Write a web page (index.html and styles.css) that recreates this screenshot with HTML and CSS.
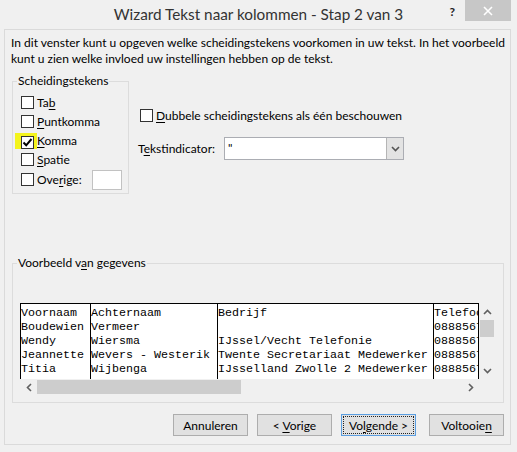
FILE: index.html
```html
<!DOCTYPE html>
<html lang="nl">
<head>
<meta charset="utf-8">
<title>Wizard Tekst naar kolommen</title>
<link rel="stylesheet" href="styles.css">
</head>
<body>
<div class="titlebar">
  <div></div>
  <div class="title">Wizard Tekst naar kolommen - Stap 2 van 3</div>
  <div class="controls">
    <span class="help">?</span>
    <span class="close"><svg width="10" height="10" viewBox="0 0 10 10"><path d="M1 1L9 9M9 1L1 9" stroke="#fff" stroke-width="1.6" fill="none"/></svg></span>
  </div>
</div>
<div class="panel">
  <p class="intro">In dit venster kunt u opgeven welke scheidingstekens voorkomen in uw tekst. In het voorbeeld<br>kunt u zien welke invloed uw instellingen hebben op de tekst.</p>
  <div class="options">
    <fieldset class="group delims">
      <legend>Scheidingstekens</legend>
      <div class="check"><span class="box"></span><span>Ta<u>b</u></span></div>
      <div class="check"><span class="box"></span><span><u>P</u>untkomma</span></div>
      <div class="check"><span class="hl"><span class="box checked"><svg width="11" height="11" viewBox="0 0 11 11"><path d="M1.5 5.5L4.2 8.3L9.5 2" stroke="#000" stroke-width="2" fill="none"/></svg></span></span><span><u>K</u>omma</span></div>
      <div class="check"><span class="box"></span><span><u>S</u>patie</span></div>
      <div class="check other"><span class="box"></span><span>Ove<u>r</u>ige:</span><span class="textbox"></span></div>
    </fieldset>
    <div class="side">
      <div class="check"><span class="box"></span><span><u>D</u>ubbele scheidingstekens als één beschouwen</span></div>
      <div class="indicator">
        <span class="ind-label">T<u>e</u>kstindicator:</span>
        <div class="select"><span class="val">"</span><span class="drop"><svg width="9" height="6" viewBox="0 0 9 6"><path d="M1 1L4.5 4.5L8 1" stroke="#555" stroke-width="1.6" fill="none"/></svg></span></div>
      </div>
    </div>
  </div>
  <fieldset class="group preview">
    <legend>Voorbeeld v<u>a</u>n gegevens</legend>
    <div class="grid">
      <div class="table">
        <div class="col c1">Voornaam
Boudewien
Wendy
Jeannette
Titia</div>
        <div class="col c2">Achternaam
Vermeer
Wiersma
Wevers - Westerik
Wijbenga</div>
        <div class="col c3">Bedrijf

IJssel/Vecht Telefonie
Twente Secretariaat Medewerker
IJsselland Zwolle 2 Medewerker</div>
        <div class="col c4">Telefoon
0888567
0888567
0888567
0888567</div>
      </div>
      <div class="vscroll">
        <span class="arr"><svg width="9" height="6" viewBox="0 0 9 6"><path d="M1 5L4.5 1.5L8 5" stroke="#606060" stroke-width="1.6" fill="none"/></svg></span>
        <span class="vthumb"></span>
        <span class="fill"></span>
        <span class="arr"><svg width="9" height="6" viewBox="0 0 9 6"><path d="M1 1L4.5 4.5L8 1" stroke="#606060" stroke-width="1.6" fill="none"/></svg></span>
      </div>
      <div class="hscroll">
        <span class="arr"><svg width="6" height="9" viewBox="0 0 6 9"><path d="M5 1L1.5 4.5L5 8" stroke="#606060" stroke-width="1.6" fill="none"/></svg></span>
        <span class="hthumb"></span>
        <span class="fill"></span>
        <span class="arr"><svg width="6" height="9" viewBox="0 0 6 9"><path d="M1 1L4.5 4.5L1 8" stroke="#606060" stroke-width="1.6" fill="none"/></svg></span>
      </div>
      <div class="corner"></div>
    </div>
  </fieldset>
  <div class="buttons">
    <button class="btn"><span>Annuleren</span></button>
    <button class="btn"><span>&lt; <u>V</u>orige</span></button>
    <button class="btn focus"><span class="focus-ring"><span>Vo<u>l</u>gende &gt;</span></span></button>
    <button class="btn finish"><span>Voltooie<u>n</u></span></button>
  </div>
</div>
</body>
</html>
```
FILE: styles.css
```css
* { box-sizing: border-box; }
html, body { margin: 0; padding: 0; }
body {
  width: 517px;
  height: 452px;
  overflow: hidden;
  background: #f0f0f0;
  font-family: Lato, "Noto Sans", sans-serif;
  font-size: 12px;
  color: #000;
}
u { text-decoration-thickness: 1px; text-underline-offset: 2px; }

.titlebar {
  height: 29px;
  display: grid;
  grid-template-columns: 1fr auto 1fr;
}
.title {
  font-size: 15.3px;
  line-height: 28px;
  color: #333;
  white-space: nowrap;
}
.controls {
  justify-self: end;
  display: flex;
  align-items: flex-start;
  margin-right: 6px;
}
.help {
  font-weight: bold;
  font-size: 12px;
  color: #222;
  margin-top: 4px;
  margin-right: 10px;
}
.close {
  width: 46px;
  height: 21px;
  background: #c7c7c7;
  display: flex;
  align-items: center;
  justify-content: center;
}

.panel {
  margin: 0 6px 0 4px;
  border: 1px solid #dadada;
  padding: 5px 6px 8px 7px;
}
.intro {
  margin: 0 0 0 -1px;
  line-height: 16px;
  white-space: nowrap;
}
.options {
  display: flex;
  align-items: flex-start;
  margin-top: 6px;
}
.group {
  margin: 0;
  border: 1px solid #dcdcdc;
  min-width: 0;
}
.group legend {
  padding: 0 1px;
  line-height: 16px;
}
.delims {
  width: 117px;
  padding: 4px 6px 3px 4px;
}
.check {
  display: flex;
  align-items: center;
  height: 19px;
  margin-left: 4px;
  white-space: nowrap;
}
.box {
  width: 13px;
  height: 13px;
  border: 1px solid #333;
  background: #fff;
  margin-right: 3px;
  flex: none;
  display: flex;
  align-items: center;
  justify-content: center;
}
.hl {
  display: flex;
  background: #f4f41c;
  margin-left: -6px;
  padding: 3px 3px 0 6px;
}
.hl .box { margin-right: 0; }
.check.other { height: 21px; }
.textbox {
  width: 30px;
  height: 20px;
  margin-left: auto;
  border: 1px solid #c2c2c2;
  background: #fff;
}
.side {
  margin-left: 11px;
  padding-top: 33px;
}
.side .check { margin-left: 0; }
.indicator {
  display: flex;
  align-items: center;
  margin-top: 12px;
}
.ind-label {
  width: 86px;
  margin-left: -2px;
}
.select {
  width: 180px;
  height: 23px;
  border: 1px solid #abadb3;
  background: #fff;
  display: flex;
}
.val {
  flex: 1;
  padding: 2px 0 0 3px;
}
.drop {
  width: 17px;
  background: #e3e3e3;
  border-left: 1px solid #b5b5b5;
  display: flex;
  align-items: center;
  justify-content: center;
}

.preview {
  margin-top: 61px;
  padding: 32px 8px 7px 4px;
}
.grid {
  margin-left: 3px;
  display: grid;
  grid-template-columns: 459px 16px;
  grid-template-rows: 76px 16px;
}
.table {
  background: #fff;
  border-top: 1px solid #000;
  display: flex;
  overflow: hidden;
  font-family: "Liberation Mono", "Courier New", monospace;
  font-size: 11.67px;
  line-height: 14px;
}
.col {
  flex: none;
  border-left: 1px solid #000;
  padding-top: 2px;
  white-space: pre;
  overflow: hidden;
}
.c1 { width: 70px; }
.c2 { width: 127px; }
.c3 { width: 216px; }
.c4 { width: 46px; border-right: 1px solid #000; }
.vscroll {
  background: #f0f0f0;
  display: flex;
  flex-direction: column;
}
.vscroll .arr {
  height: 17px;
  display: flex;
  align-items: center;
  justify-content: center;
}
.vthumb {
  height: 17px;
  margin: 0 1px;
  background: #cdcdcd;
}
.fill { flex: 1; }
.hscroll {
  background: #f0f0f0;
  display: flex;
}
.hscroll .arr {
  width: 17px;
  display: flex;
  align-items: center;
  justify-content: center;
}
.hthumb {
  width: 204px;
  margin: 1px 0;
  background: #cdcdcd;
}
.corner { background: #f0f0f0; }

.buttons {
  display: flex;
  justify-content: flex-end;
  margin-top: 11px;
}
.btn {
  width: 75px;
  height: 22px;
  margin: 0 0 0 9px;
  padding: 0;
  border: 1px solid #adadad;
  background: #e1e1e1;
  font-family: Lato, "Noto Sans", sans-serif;
  font-size: 12px;
  color: #000;
  display: flex;
  align-items: center;
  justify-content: center;
  white-space: nowrap;
}
.btn.finish { margin-left: 13px; }
.btn.focus {
  border-color: #5b9ee0;
  padding: 1px;
  align-items: stretch;
}
.focus-ring {
  flex: 1;
  border: 1px dotted #222;
  display: flex;
  align-items: center;
  justify-content: center;
}
```
